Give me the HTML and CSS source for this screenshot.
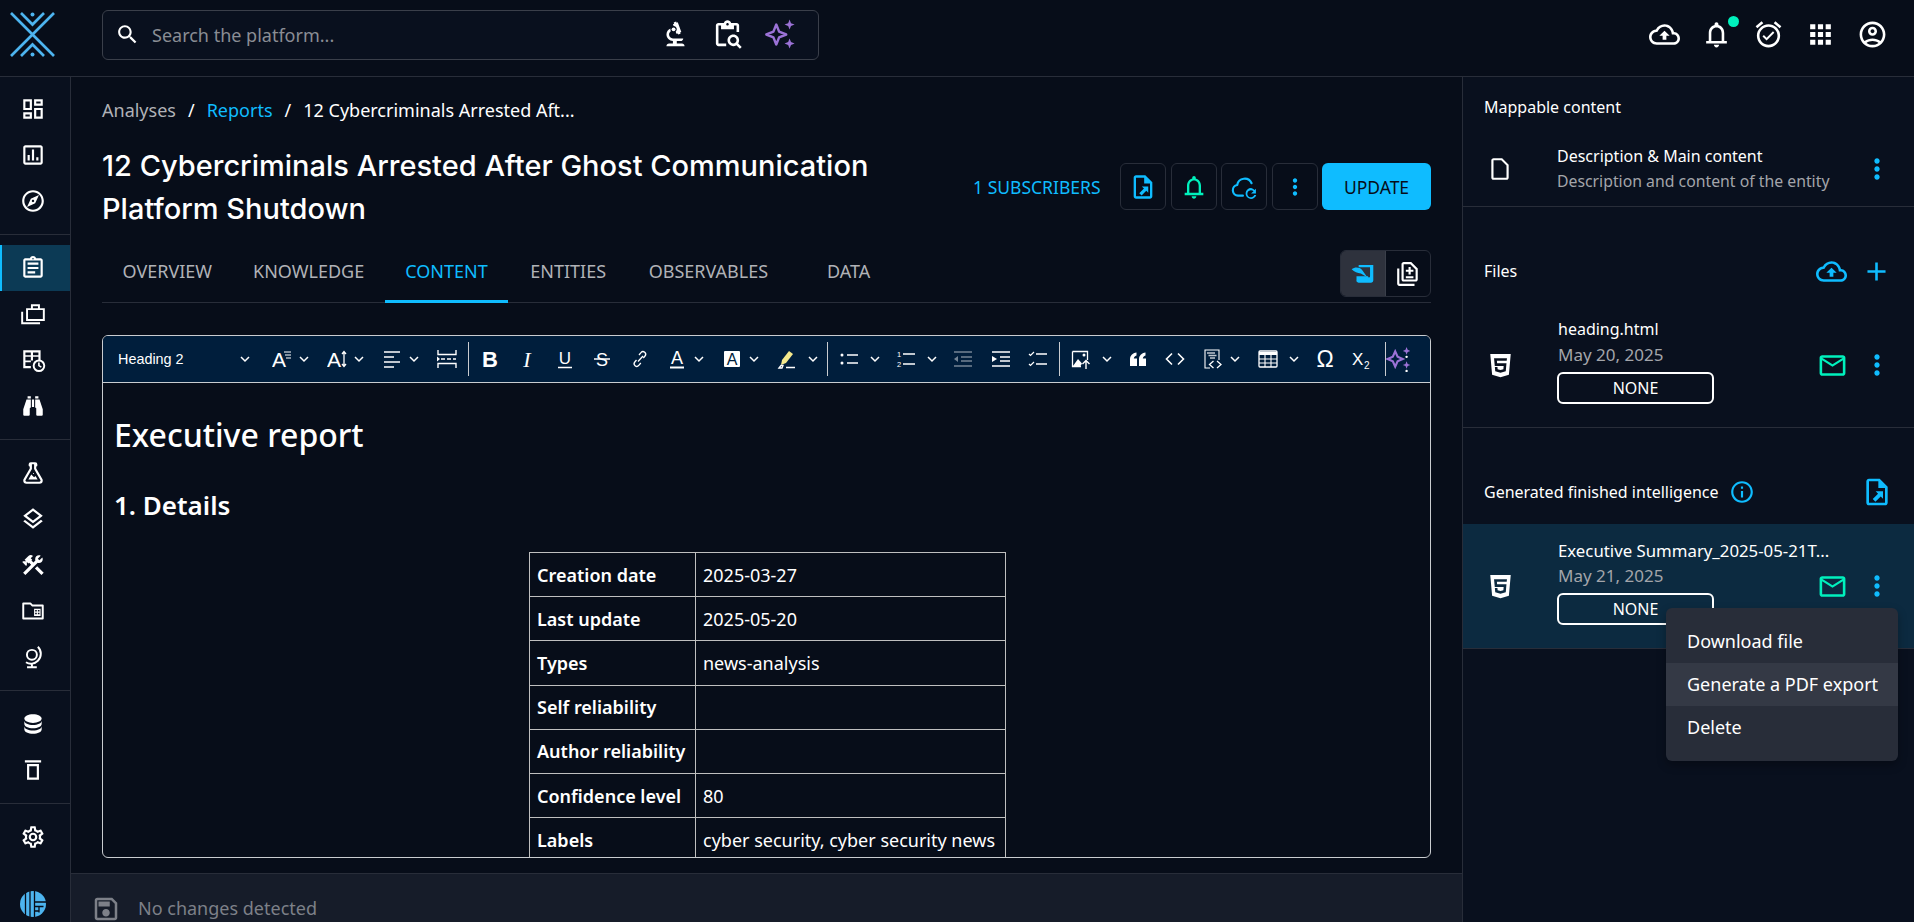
FILE: index.html
```html
<!DOCTYPE html>
<html lang="en">
<head>
    <meta charset="UTF-8">
    <meta name="viewport" content="width=device-width, initial-scale=1.0">
    <title>12 Cybercriminals Arrested After Ghost Communication Platform Shutdown</title>
    <link rel="stylesheet" href="styles.css">
</head>
<body>
    <svg class="sprite" xmlns="http://www.w3.org/2000/svg">
        <symbol id="i-search" viewBox="0 0 24 24"><path d="M15.5 14h-.79l-.28-.27C15.41 12.59 16 11.11 16 9.5 16 5.91 13.09 3 9.5 3S3 5.91 3 9.5 5.91 16 9.5 16c1.61 0 3.09-.59 4.23-1.57l.27.28v.79l5 4.99L20.49 19l-4.99-5zm-6 0C7.01 14 5 11.99 5 9.5S7.01 5 9.5 5 14 7.01 14 9.5 11.99 14 9.5 14z"/></symbol>
        <symbol id="i-biotech" viewBox="0 0 24 24"><path d="M7 19c-1.1 0-2 .9-2 2h14c0-1.1-.9-2-2-2h-4v-2h3c1.1 0 2-.9 2-2h-8c-1.66 0-3-1.34-3-3 0-1.09.59-2.04 1.46-2.56C8.17 9.03 8 8.54 8 8c0-.21.04-.42.09-.62C6.28 8.13 5 9.92 5 12c0 2.76 2.24 5 5 5v2H7z"/><path d="M10.56 5.51C11.91 5.54 13 6.64 13 8c0 .75-.33 1.41-.85 1.87l.59 1.62.94-.34.34.94 1.88-.68-.34-.94.94-.34-2.74-7.52-.94.34-.34-.94-1.88.68.34.94-.94.35.56 1.53z"/><circle cx="10.5" cy="8" r="1.5"/></symbol>
        <symbol id="i-paste-search" viewBox="0 0 24 24"><path d="M5 5h2v3h10V5h2v5h2V5c0-1.1-.9-2-2-2h-4.18C14.4 1.84 13.3 1 12 1S9.6 1.84 9.18 3H5c-1.1 0-2 .9-2 2v14c0 1.1.9 2 2 2h6v-2H5V5zm7-2c.55 0 1 .45 1 1s-.45 1-1 1-1-.45-1-1 .45-1 1-1z"/><path d="M20.3 18.9c.4-.7.7-1.5.7-2.4 0-2.5-2-4.5-4.5-4.5S12 14 12 16.5s2 4.5 4.5 4.5c.9 0 1.7-.3 2.4-.7l2.7 2.7 1.4-1.4-2.7-2.7zm-3.8.1c-1.4 0-2.5-1.1-2.5-2.5s1.1-2.5 2.5-2.5 2.5 1.1 2.5 2.5-1.1 2.500-2.5 2.5z"/></symbol>
        <symbol id="i-sparkle" viewBox="0 0 24 24"><path d="M9.5 4.3l2.2 5.500 5.500 2.200-5.500 2.200-2.200 5.500-2.200-5.500L1.800 12l5.500-2.200z" fill="none" stroke="currentColor" stroke-width="1.9" stroke-linejoin="round"/><path d="M19.8.4l1.1 2.800 2.800 1.100-2.800 1.100-1.100 2.800-1.100-2.800-2.800-1.100 2.800-1.100zM19.8 15.100l1.100 2.800 2.800 1.100-2.800 1.100-1.100 2.800-1.100-2.800-2.800-1.100 2.800-1.100z"/></symbol>
        <symbol id="i-cloud-up" viewBox="0 0 24 24"><path d="M19.35 10.04C18.67 6.59 15.64 4 12 4 9.11 4 6.6 5.64 5.35 8.04 2.34 8.36 0 10.91 0 14c0 3.31 2.69 6 6 6h13c2.76 0 5-2.24 5-5 0-2.64-2.05-4.78-4.65-4.96zM19 18H6c-2.21 0-4-1.79-4-4 0-2.05 1.53-3.76 3.56-3.97l1.07-.11.5-.95C8.08 7.14 9.94 6 12 6c2.62 0 4.88 1.86 5.39 4.43l.3 1.5 1.53.11c1.56.1 2.78 1.41 2.78 2.96 0 1.65-1.35 3-3 3zM8 13h2.55v3h2.9v-3H16l-4-4z"/></symbol>
        <symbol id="i-bell" viewBox="0 0 24 24"><path d="M12 22c1.1 0 2-.9 2-2h-4c0 1.1.9 2 2 2zm6-6v-5c0-3.07-1.63-5.64-4.5-6.32V4c0-.83-.67-1.5-1.5-1.5s-1.5.67-1.5 1.5v.68C7.64 5.36 6 7.92 6 11v6H4v2h16v-2h-2zm-2 1H8v-6c0-2.48 1.51-4.5 4-4.5s4 2.02 4 4.5v6z"/></symbol>
        <symbol id="i-alarm" viewBox="0 0 24 24"><path d="M10.54 14.53 8.41 12.4l-1.06 1.06 3.18 3.18 6-6-1.06-1.06zm6.797-12.72 4.607 3.845-1.28 1.535-4.61-3.843zm-10.674 0 1.282 1.536L3.337 7.19l-1.28-1.536zM12 4c-4.97 0-9 4.03-9 9s4.03 9 9 9 9-4.03 9-9-4.03-9-9-9zm0 16c-3.86 0-7-3.14-7-7s3.14-7 7-7 7 3.14 7 7-3.14 7-7 7z"/></symbol>
        <symbol id="i-apps" viewBox="0 0 24 24"><path d="M4 8h4V4H4v4zm6 12h4v-4h-4v4zm-6 0h4v-4H4v4zm0-6h4v-4H4v4zm6 0h4v-4h-4v4zm6-10v4h4V4h-4zm-6 4h4V4h-4v4zm6 6h4v-4h-4v4zm0 6h4v-4h-4v4z"/></symbol>
        <symbol id="i-user" viewBox="0 0 24 24"><path d="M12 2C6.48 2 2 6.48 2 12s4.48 10 10 10 10-4.48 10-10S17.52 2 12 2zM7.35 18.5C8.66 17.56 10.26 17 12 17s3.34.56 4.65 1.5c-1.31.94-2.91 1.5-4.65 1.5s-3.34-.56-4.65-1.5zm10.79-1.38C16.45 15.8 14.32 15 12 15s-4.45.8-6.14 2.12C4.7 15.73 4 13.95 4 12c0-4.42 3.58-8 8-8s8 3.58 8 8c0 1.95-.7 3.73-1.86 5.12z"/><path d="M12 6c-1.93 0-3.5 1.57-3.5 3.5S10.07 13 12 13s3.5-1.57 3.5-3.5S13.93 6 12 6zm0 5c-.83 0-1.5-.67-1.5-1.5S11.17 8 12 8s1.5.67 1.5 1.5S12.83 11 12 11z"/></symbol>
        <symbol id="i-dash" viewBox="0 0 24 24"><path d="M19 5v2h-4V5h4M9 5v6H5V5h4m10 8v6h-4v-6h4M9 17v2H5v-2h4M21 3h-8v6h8V3zM11 3H3v10h8V3zm10 8h-8v10h8V11zm-10 4H3v6h8v-6z"/></symbol>
        <symbol id="i-assess" viewBox="0 0 24 24"><path d="M19 3H5c-1.1 0-2 .9-2 2v14c0 1.1.9 2 2 2h14c1.1 0 2-.9 2-2V5c0-1.1-.9-2-2-2zm0 16H5V5h14v14z"/><path d="M7 12h2v5H7zM11 7h2v10h-2zM15 14h2v3h-2z"/></symbol>
        <symbol id="i-explore" viewBox="0 0 24 24"><path d="M12 2C6.48 2 2 6.48 2 12s4.48 10 10 10 10-4.48 10-10S17.52 2 12 2zm0 18c-4.41 0-8-3.59-8-8s3.59-8 8-8 8 3.59 8 8-3.59 8-8 8zm-5.5-2.5l7.51-3.49L17.5 6.5 9.99 9.99 6.5 17.5zm5.5-6.6c.61 0 1.1.49 1.1 1.1s-.49 1.1-1.1 1.1-1.1-.49-1.1-1.1.49-1.1 1.1-1.1z"/></symbol>
        <symbol id="i-assign" viewBox="0 0 24 24"><path d="M7 15h7v2H7zm0-4h10v2H7zm0-4h10v2H7zm12-4h-4.18C14.4 1.84 13.3 1 12 1c-1.3 0-2.4.84-2.82 2H5c-.14 0-.27.01-.4.04-.39.08-.74.28-1.01.55-.18.18-.33.4-.43.64-.1.23-.16.49-.16.77v14c0 .27.06.54.16.78s.25.45.43.64c.27.27.62.47 1.01.55.13.02.26.03.4.03h14c1.1 0 2-.9 2-2V5c0-1.1-.9-2-2-2zm-7-.25c.41 0 .75.34.75.75s-.34.75-.75.75-.75-.34-.75-.75.34-.75.75-.75zM19 19H5V5h14v14z"/></symbol>
        <symbol id="i-cases" viewBox="0 0 24 24"><path d="M6.5 7.5h15.500v10H6.500z M11 7.500V4h6.500v3.500" fill="none" stroke="currentColor" stroke-width="1.800"/><path d="M2 10v10.500h16.500" fill="none" stroke="currentColor" stroke-width="1.800"/></symbol>
        <symbol id="i-table-clock" viewBox="0 0 24 24"><path d="M3 3h16v9h-2V9h-5v3.500h-2V9H5v3.500h5V14H5v3.500h5v2H3zM5 5v2.500h5V5zm7 0v2.500h5V5z" fill-rule="evenodd"/><path d="M17.500 11.500a5.800 5.800 0 1 0 0 11.600 5.800 5.800 0 0 0 0-11.600zm0 9.800a4 4 0 1 1 0-8 4 4 0 0 1 0 8zm-.8-7v3.300l2.600 1.600.8-1.300-1.900-1.100v-2.500z"/></symbol>
        <symbol id="i-binoc" viewBox="0 0 24 24"><path d="M11 6h2v7h-2V6M9 20a1 1 0 0 1-1 1H4a1 1 0 0 1-1-1v-5l3-9h4v7a1 1 0 0 1-1 1v6m1-15H7V3h3v2m5 15v-6a1 1 0 0 1-1-1V6h4l3 9v5a1 1 0 0 1-1 1h-4a1 1 0 0 1-1-1m-1-15V3h3v2h-3z"/></symbol>
        <symbol id="i-flask" viewBox="0 0 24 24"><path d="M5 19a1 1 0 0 0 1 1h12a1 1 0 0 0 1-1c0-.21-.07-.41-.18-.57L13 8.350V4h-2v4.350L5.180 18.430C5.070 18.590 5 18.790 5 19m1 3a3 3 0 0 1-3-3c0-.6.180-1.160.5-1.630L9 7.810V6a1 1 0 0 1-1-1V4a2 2 0 0 1 2-2h4a2 2 0 0 1 2 2v1a1 1 0 0 1-1 1v1.810l5.500 9.560c.32.470.5 1.030.5 1.630a3 3 0 0 1-3 3H6m7-6 1.340-1.340L16.270 18H7.730l2.660-4.610L13 16m-.5-4a.5.5 0 0 1 .5.5.5.5 0 0 1-.5.5.5.5 0 0 1-.5-.5.5.5 0 0 1 .5-.5z"/></symbol>
        <symbol id="i-layers" viewBox="0 0 24 24"><path d="M11.990 18.540l-7.370-5.730L3 14.070l9 7 9-7-1.630-1.270-7.380 5.740zM12 16l7.360-5.730L21 9l-9-7-9 7 1.630 1.270L12 16zm0-11.470L17.740 9 12 13.470 6.260 9 12 4.530z"/></symbol>
        <symbol id="i-tools" viewBox="0 0 24 24"><path d="M13.780 15.300l6 6 2.110-2.160-6-6-2.110 2.160M17.500 10.100c-.39 0-.81-.05-1.140-.19L4.970 21.250l-2.110-2.110 7.410-7.400L8.500 9.960l-.72.7-1.450-1.410v2.860l-.7.700-3.520-3.560.7-.7h2.810L4.220 7.140l3.560-3.560c1.170-1.170 3.050-1.170 4.220 0L9.890 5.740l1.410 1.400-.71.71 1.790 1.780 1.820-1.880c-.14-.33-.2-.75-.2-1.120 0-1.970 1.560-3.520 3.500-3.520.59 0 1.110.14 1.580.42L16.410 6.200l1.500 1.500 2.670-2.670c.28.470.42.97.42 1.600 0 1.920-1.550 3.470-3.500 3.470z"/></symbol>
        <symbol id="i-folder" viewBox="0 0 24 24"><path d="M3 5h6.500l2 2H21v12H3z" fill="none" stroke="currentColor" stroke-width="1.800" stroke-linejoin="round"/><path d="M13 10h6v6.500h-6zm1 1v1.500h1.500V11zm2.500 0v1.500H18V11zM14 13.500V15h1.500v-1.500zm2.500 0V15H18v-1.500z" fill-rule="evenodd"/></symbol>
        <symbol id="i-globe" viewBox="0 0 24 24"><circle cx="11" cy="10" r="4.600" fill="none" stroke="currentColor" stroke-width="1.800"/><path d="M16.500 2.500c3.600 3.600 3.600 9.400 0 13-3 3-7.600 3.500-11 1.300M11 18.500V21M6.500 21.500h9" fill="none" stroke="currentColor" stroke-width="1.800"/></symbol>
        <symbol id="i-db" viewBox="0 0 24 24"><path d="M12 3C7.580 3 4 4.790 4 7c0 2.210 3.580 4 8 4s8-1.790 8-4c0-2.210-3.580-4-8-4M4 9v3c0 2.210 3.580 4 8 4s8-1.790 8-4V9c0 2.210-3.580 4-8 4s-8-1.790-8-4m0 5v3c0 2.210 3.580 4 8 4s8-1.790 8-4v-3c0 2.210-3.580 4-8 4s-8-1.790-8-4z"/></symbol>
        <symbol id="i-trash" viewBox="0 0 24 24"><path d="M4.500 3h15v2h-15zM6.500 6.500h11V21h-11zm2 2V19h7V8.500z" fill-rule="evenodd"/></symbol>
        <symbol id="i-cog" viewBox="0 0 24 24"><path d="M12 8a4 4 0 0 1 4 4 4 4 0 0 1-4 4 4 4 0 0 1-4-4 4 4 0 0 1 4-4m0 2a2 2 0 0 0-2 2 2 2 0 0 0 2 2 2 2 0 0 0 2-2 2 2 0 0 0-2-2m-2 12c-.25 0-.46-.18-.5-.42l-.37-2.650c-.63-.25-1.170-.59-1.690-.99l-2.490 1.010c-.22.08-.49 0-.61-.22l-2-3.460c-.13-.22-.07-.49.12-.64l2.110-1.660L4.500 12l.07-1-2.110-1.630c-.19-.15-.25-.42-.12-.64l2-3.460c.12-.22.39-.31.61-.22l2.490 1c.52-.39 1.060-.73 1.690-.98l.37-2.650c.04-.24.25-.42.5-.42h4c.25 0 .46.18.5.42l.37 2.650c.63.25 1.170.59 1.690.98l2.490-1c.22-.09.49 0 .61.22l2 3.460c.13.22.07.49-.12.64L19.430 11l.07 1-.07 1 2.110 1.630c.19.15.25.42.12.64l-2 3.460c-.12.22-.39.31-.61.22l-2.490-1c-.52.39-1.060.73-1.690.98l-.37 2.650c-.04.24-.25.42-.5.42h-4m1.250-18-.37 2.610c-1.200.25-2.260.89-3.030 1.780L5.440 7.350l-.75 1.300L6.800 10.200c-.4 1.170-.4 2.440 0 3.600l-2.120 1.560.75 1.300 2.430-1.040c.77.880 1.820 1.520 3.010 1.760l.37 2.620h1.520l.37-2.610c1.190-.25 2.240-.89 3.010-1.770l2.430 1.040.75-1.300-2.120-1.550c.4-1.170.4-2.440 0-3.610l2.110-1.550-.75-1.300-2.410 1.040c-.77-.890-1.830-1.530-3.030-1.770L12.750 4h-1.500z"/></symbol>
        <symbol id="i-more" viewBox="0 0 24 24"><path d="M12 8c1.100 0 2-.9 2-2s-.9-2-2-2-2 .9-2 2 .9 2 2 2zm0 2c-1.100 0-2 .9-2 2s.9 2 2 2 2-.9 2-2-.9-2-2-2zm0 6c-1.100 0-2 .9-2 2s.9 2 2 2 2-.9 2-2-.9-2-2-2z"/></symbol>
        <symbol id="i-file-export" viewBox="0 0 24 24"><path d="M14 2H6c-1.100 0-2 .9-2 2v16c0 1.100.9 2 2 2h12c1.100 0 2-.9 2-2V8l-6-6zm4 18H6V4h7v5h5v11z"/><path d="M16.500 11.500H11l1.800 1.800-4 4 2 2 4-4 1.700 1.700z"/></symbol>
        <symbol id="i-cloud-refresh" viewBox="0 0 24 24"><path d="M11 20H6.500a5 5 0 0 1-.8-9.900A7 7 0 0 1 19 8.500" fill="none" stroke="currentColor" stroke-width="2" stroke-linecap="round"/><path d="M18.500 13a5 5 0 1 0 4.800 6.300h-1.800a3.300 3.300 0 1 1-.7-3.300L18.500 18H23v-4.500l-1.300 1.300a5 5 0 0 0-3.200-1.800z"/></symbol>
        <symbol id="i-feather" viewBox="0 0 24 24"><path d="M8 3.700h13.500V18a2 2 0 0 1-2 2H8a2.500 2.500 0 0 1-2-3v-3h10.500l1 1.500 1-1V5.800H8z"/><path d="M1.500 7.500C5 5 9 6 11 8l5 7-6-3.500c-3-.5-6-1.500-8.500-4z"/></symbol>
        <symbol id="i-diff" viewBox="0 0 24 24"><path d="M18 23H4c-1.100 0-2-.9-2-2V7h2v14h14v2zM15 1H8c-1.100 0-1.990.9-1.990 2L6 17c0 1.100.89 2 1.990 2H19c1.100 0 2-.9 2-2V7l-6-6zm4 16H8V3h6.170L19 7.830V17z"/><path d="M14.500 5.500h-2v2.500H10v2h2.500v2.500h2V10H17V8h-2.500zM10 14h7v2h-7z"/></symbol>
        <symbol id="i-page" viewBox="0 0 24 24"><path d="M13.170 4 18 8.830V20H6V4h7.170M14 2H6c-1.100 0-2 .9-2 2v16c0 1.100.9 2 2 2h12c1.100 0 2-.9 2-2V8l-6-6z"/></symbol>
        <symbol id="i-html" viewBox="0 0 24 24"><path d="M12 17.560l4.070-1.130.55-6.100H9.380L9.200 8.300h7.600l.2-1.990H7l.56 6.010h6.890l-.23 2.580L12 15.500l-2.220-.6-.14-1.660h-2l.29 3.190L12 17.560M4.070 3h15.860L18.500 19.200 12 21l-6.500-1.800L4.070 3z"/></symbol>
        <symbol id="i-mail" viewBox="0 0 24 24"><path d="M22 6c0-1.100-.9-2-2-2H4c-1.100 0-2 .9-2 2v12c0 1.100.9 2 2 2h16c1.100 0 2-.9 2-2V6zm-2 0-8 5-8-5h16zm0 12H4V8l8 5 8-5v10z"/></symbol>
        <symbol id="i-add" viewBox="0 0 24 24"><path d="M19 13h-6v6h-2v-6H5v-2h6V5h2v6h6v2z"/></symbol>
        <symbol id="i-info" viewBox="0 0 24 24"><path d="M11 7h2v2h-2zm0 4h2v6h-2zm1-9C6.480 2 2 6.480 2 12s4.480 10 10 10 10-4.480 10-10S17.520 2 12 2zm0 18c-4.410 0-8-3.590-8-8s3.590-8 8-8 8 3.590 8 8-3.590 8-8 8z"/></symbol>
        <symbol id="i-save" viewBox="0 0 24 24"><path d="M17 3H5c-1.110 0-2 .9-2 2v14c0 1.100.89 2 2 2h14c1.100 0 2-.9 2-2V7l-4-4zm2 16H5V5h11.170L19 7.830V19zm-7-7c-1.660 0-3 1.340-3 3s1.340 3 3 3 3-1.340 3-3-1.340-3-3-3zM6 6h9v4H6z"/></symbol>

        <!-- editor toolbar -->
        <symbol id="t-chev" viewBox="0 0 10 10"><path d="M1 3l4 4 4-4" fill="none" stroke="currentColor" stroke-width="1.500"/></symbol>
        <symbol id="t-fontsize" viewBox="0 0 20 20"><text x="0" y="18" font-family="Liberation Sans" font-size="21">A</text><path d="M12 3h7M13 6h6M14 9h5" stroke="currentColor" stroke-width="1.200"/></symbol>
        <symbol id="t-lineheight" viewBox="0 0 20 20"><text x="0" y="18" font-family="Liberation Sans" font-size="21">A</text><path d="M17 3v14M15 5l2-2.500L19 5M15 15l2 2.500 2-2.500" fill="none" stroke="currentColor" stroke-width="1.300"/></symbol>
        <symbol id="t-align" viewBox="0 0 20 20"><path d="M2 3h16M2 8h10M2 13h16M2 18h10" stroke="currentColor" stroke-width="1.500"/></symbol>
        <symbol id="t-pagebreak" viewBox="0 0 20 20"><path d="M1 1v4.500h18V1M1 19v-4.500h18V19" fill="none" stroke="currentColor" stroke-width="1.400"/><path d="M4 10h4M10 10h4M16 10h3" stroke="currentColor" stroke-width="1.600"/><path d="M0 7.500l3 2.500-3 2.500z"/></symbol>
        <symbol id="t-bold" viewBox="0 0 20 20"><text x="10" y="18" text-anchor="middle" font-family="Liberation Sans" font-weight="700" font-size="22">B</text></symbol>
        <symbol id="t-italic" viewBox="0 0 20 20"><text x="10" y="17.500" text-anchor="middle" font-family="Liberation Serif" font-style="italic" font-size="22">I</text></symbol>
        <symbol id="t-under" viewBox="0 0 20 20"><text x="10" y="15" text-anchor="middle" font-family="Liberation Sans" font-size="17">U</text><path d="M3 18.500h14" stroke="currentColor" stroke-width="1.500"/></symbol>
        <symbol id="t-strike" viewBox="0 0 20 20"><text x="10" y="16.500" text-anchor="middle" font-family="Liberation Sans" font-size="18">S</text><path d="M2 10h16" stroke="currentColor" stroke-width="1.400"/></symbol>
        <symbol id="t-link" viewBox="0 0 20 20"><path d="M8 12.500l5-5.500M6.500 11l-1.700 2a2.600 2.600 0 0 0 4 3.400l2-2.400M9 6l2-2.400a2.600 2.600 0 0 1 4 3.400L13.300 9" fill="none" stroke="currentColor" stroke-width="1.300"/></symbol>
        <symbol id="t-color" viewBox="0 0 20 20"><text x="10" y="15" text-anchor="middle" font-family="Liberation Sans" font-size="18">A</text><path d="M3 18.500h14" stroke="currentColor" stroke-width="1.800"/></symbol>
        <symbol id="t-bgcolor" viewBox="0 0 20 20"><rect x="2" y="2" width="16" height="16" rx="1"/><text x="10" y="16" text-anchor="middle" font-family="Liberation Sans" font-size="16" fill="#001e3c">A</text></symbol>
        <symbol id="t-mark" viewBox="0 0 20 20"><path d="M4 16l1-5 7-9 4 3-7 9z" fill="#f5e98c"/><path d="M2 19l2-2.500h2L5 19zM9 18.500h9" fill="none" stroke="currentColor" stroke-width="1.300"/></symbol>
        <symbol id="t-bullets" viewBox="0 0 20 20"><circle cx="3" cy="6" r="1.500"/><circle cx="3" cy="14" r="1.500"/><path d="M8 6h11M8 14h11" stroke="currentColor" stroke-width="1.500"/></symbol>
        <symbol id="t-numbers" viewBox="0 0 20 20"><text x="1" y="8" font-family="Liberation Sans" font-size="7.500">1</text><text x="1" y="18" font-family="Liberation Sans" font-size="7.500">2</text><path d="M7 5h12M7 15h12" stroke="currentColor" stroke-width="1.500"/></symbol>
        <symbol id="t-outdent" viewBox="0 0 20 20"><path d="M1 3h18M8 8h11M8 12h11M1 17h18" stroke="currentColor" stroke-width="1.500"/><path d="M1 10l4-3v6z"/></symbol>
        <symbol id="t-indent" viewBox="0 0 20 20"><path d="M1 3h18M9 8h10M9 12h10M1 17h18" stroke="currentColor" stroke-width="1.500"/><path d="M6 10L1 7v6z"/></symbol>
        <symbol id="t-todo" viewBox="0 0 20 20"><path d="M1 5l1.500 1.500L6 3M1 15l1.500 1.500L6 13" fill="none" stroke="currentColor" stroke-width="1.200"/><path d="M8 5h11M8 15h11" stroke="currentColor" stroke-width="1.500"/></symbol>
        <symbol id="t-image" viewBox="0 0 20 20"><path d="M1.500 2.500h15v8.500M10 17.500H1.500v-15" fill="none" stroke="currentColor" stroke-width="1.300"/><circle cx="13" cy="6" r="1.500"/><path d="M2 17l5-7 4 4.500-1.500 2.500z"/><path d="M15 20v-8M11.500 15l3.500-3.500 3.500 3.500" fill="none" stroke="currentColor" stroke-width="1.400"/></symbol>
        <symbol id="t-quote" viewBox="0 0 20 20"><path d="M2 10.500C2 6.500 4.500 4 8.500 3.500V6.500C6.800 7 6 8 5.800 9.500H9V17H2zM11 10.500C11 6.500 13.500 4 17.500 3.500V6.500C15.800 7 15 8 14.800 9.500H18V17h-7z"/></symbol>
        <symbol id="t-code" viewBox="0 0 20 20"><path d="M7 4.500L1.500 10 7 15.500M13 4.500l5.500 5.500-5.500 5.500" fill="none" stroke="currentColor" stroke-width="1.600"/></symbol>
        <symbol id="t-source" viewBox="0 0 20 20"><path d="M7 19H2V1h14v10" fill="none" stroke="currentColor" stroke-width="1.100"/><path d="M4 4h8M5.500 6.500h8M7 9h5" stroke="currentColor" stroke-width="1.300" opacity=".75"/><path d="M10.500 12l-4 3.500 4 3.500M14 12l4 3.500-4 3.500" fill="none" stroke="currentColor" stroke-width="1.300"/></symbol>
        <symbol id="t-table" viewBox="0 0 20 20"><rect x="1" y="2" width="18" height="16" rx="1" fill="none" stroke="currentColor" stroke-width="1.300"/><path d="M1 3h18v3H1z"/><path d="M1 10h18M1 14h18M7 6v12M13 6v12" stroke="currentColor" stroke-width="1.100"/></symbol>
        <symbol id="t-omega" viewBox="0 0 20 20"><text x="10" y="18" text-anchor="middle" font-family="Liberation Sans" font-size="23">Ω</text></symbol>
        <symbol id="t-sub" viewBox="0 0 20 20"><text x="0" y="15.500" font-family="Liberation Sans" font-size="17">X</text><text x="12" y="19.500" font-family="Liberation Sans" font-size="10">2</text></symbol>
        <symbol id="t-ai" viewBox="0 0 24 24"><path d="M8.500 5l2.200 4.800 4.800 2.200-4.800 2.200-2.200 4.800-2.200-4.800-4.800-2.200 4.800-2.200z" fill="none" stroke="#9b72d6" stroke-width="2"/><path d="M19 1l1 2.500 2.500 1-2.500 1L19 8l-1-2.500-2.500-1 2.500-1z" fill="#9b72d6"/><path d="M19 14l1 2.500 2.500 1-2.500 1-1 2.500-1-2.500-2.500-1 2.500-1z" fill="#9b72d6"/><circle cx="19" cy="10" r="1.100" fill="currentColor"/><circle cx="19" cy="23" r="1.100" fill="currentColor"/></symbol>
    </svg>

    <header class="topbar">
        <svg class="logo" viewBox="0 0 45 45">
            <path d="M1 1l43 43M44 1L1 44M11 1l11.500 11.500L34 1M11 44l11.500-11.500L34 44" fill="none" stroke="#4db4ef" stroke-width="2.700"/>
            <circle cx="22.500" cy="2.500" r="2" fill="#4db4ef"/>
            <circle cx="22.500" cy="42.500" r="2" fill="#4db4ef"/>
        </svg>
        <div class="search">
            <svg class="ic ic-search"><use href="#i-search"/></svg>
            <span class="search-text">Search the platform...</span>
            <svg class="ic ic-31"><use href="#i-biotech"/></svg>
            <svg class="ic ic-31"><use href="#i-paste-search"/></svg>
            <svg class="ic ic-31 purple"><use href="#i-sparkle"/></svg>
        </div>
        <div class="top-icons">
            <svg class="ic ic-31"><use href="#i-cloud-up"/></svg>
            <span class="bell-wrap"><svg class="ic ic-31"><use href="#i-bell"/></svg><span class="badge"></span></span>
            <svg class="ic ic-31"><use href="#i-alarm"/></svg>
            <svg class="ic ic-31"><use href="#i-apps"/></svg>
            <svg class="ic ic-31"><use href="#i-user"/></svg>
        </div>
    </header>

    <div class="shell">
        <nav class="sidebar">
            <div class="side-group">
                <a class="side-item"><svg class="ic"><use href="#i-dash"/></svg></a>
                <a class="side-item"><svg class="ic"><use href="#i-assess"/></svg></a>
                <a class="side-item"><svg class="ic"><use href="#i-explore"/></svg></a>
            </div>
            <div class="side-group">
                <a class="side-item active"><svg class="ic"><use href="#i-assign"/></svg></a>
                <a class="side-item"><svg class="ic"><use href="#i-cases"/></svg></a>
                <a class="side-item"><svg class="ic"><use href="#i-table-clock"/></svg></a>
                <a class="side-item"><svg class="ic"><use href="#i-binoc"/></svg></a>
            </div>
            <div class="side-group">
                <a class="side-item"><svg class="ic"><use href="#i-flask"/></svg></a>
                <a class="side-item"><svg class="ic"><use href="#i-layers"/></svg></a>
                <a class="side-item"><svg class="ic"><use href="#i-tools"/></svg></a>
                <a class="side-item"><svg class="ic"><use href="#i-folder"/></svg></a>
                <a class="side-item"><svg class="ic"><use href="#i-globe"/></svg></a>
            </div>
            <div class="side-group">
                <a class="side-item"><svg class="ic"><use href="#i-db"/></svg></a>
                <a class="side-item"><svg class="ic"><use href="#i-trash"/></svg></a>
            </div>
            <div class="side-group last">
                <a class="side-item"><svg class="ic"><use href="#i-cog"/></svg></a>
            </div>
            <svg class="filigran" viewBox="0 0 26 26">
                <circle cx="13" cy="13" r="13" fill="#4db4ef"/>
                <path d="M5.500 1v24M10 0v26M14.500 0v26M14.500 11H26M14.500 15.500h9M19 15.500v6M14.500 20h5" fill="none" stroke="#070d19" stroke-width="1.300"/>
            </svg>
        </nav>

        <main class="main">
            <div class="content">
                <div class="breadcrumb">
                    <span class="crumb-muted">Analyses</span>
                    <span class="crumb-sep">/</span>
                    <span class="crumb-link">Reports</span>
                    <span class="crumb-sep">/</span>
                    <span>12 Cybercriminals Arrested Aft...</span>
                </div>

                <div class="title-row">
                    <h1 class="page-title">12 Cybercriminals Arrested After Ghost Communication Platform Shutdown</h1>
                    <div class="actions">
                        <span class="subscribers">1 SUBSCRIBERS</span>
                        <button class="icon-btn blue"><svg class="ic ic-28"><use href="#i-file-export"/></svg></button>
                        <button class="icon-btn green"><svg class="ic ic-28"><use href="#i-bell"/></svg></button>
                        <button class="icon-btn blue"><svg class="ic"><use href="#i-cloud-refresh"/></svg></button>
                        <button class="icon-btn blue"><svg class="ic"><use href="#i-more"/></svg></button>
                        <button class="update-btn">UPDATE</button>
                    </div>
                </div>

                <div class="tabs-row">
                    <div class="tabs">
                        <a class="tab">OVERVIEW</a>
                        <a class="tab">KNOWLEDGE</a>
                        <a class="tab active">CONTENT</a>
                        <a class="tab">ENTITIES</a>
                        <a class="tab">OBSERVABLES</a>
                        <a class="tab">DATA</a>
                    </div>
                    <div class="toggle">
                        <button class="toggle-btn on"><svg class="ic"><use href="#i-feather"/></svg></button>
                        <button class="toggle-btn"><svg class="ic"><use href="#i-diff"/></svg></button>
                    </div>
                </div>

                <section class="editor">
                    <div class="toolbar">
                        <div class="tb-heading">Heading 2 <svg class="tb-chev"><use href="#t-chev"/></svg></div>
                        <span class="tb-item drop"><svg class="tb-ic"><use href="#t-fontsize"/></svg><svg class="tb-chev"><use href="#t-chev"/></svg></span>
                        <span class="tb-item drop"><svg class="tb-ic"><use href="#t-lineheight"/></svg><svg class="tb-chev"><use href="#t-chev"/></svg></span>
                        <span class="tb-item drop"><svg class="tb-ic"><use href="#t-align"/></svg><svg class="tb-chev"><use href="#t-chev"/></svg></span>
                        <span class="tb-item"><svg class="tb-ic"><use href="#t-pagebreak"/></svg></span>
                        <span class="tb-sep"></span>
                        <span class="tb-item"><svg class="tb-ic"><use href="#t-bold"/></svg></span>
                        <span class="tb-item"><svg class="tb-ic"><use href="#t-italic"/></svg></span>
                        <span class="tb-item"><svg class="tb-ic"><use href="#t-under"/></svg></span>
                        <span class="tb-item"><svg class="tb-ic"><use href="#t-strike"/></svg></span>
                        <span class="tb-item"><svg class="tb-ic"><use href="#t-link"/></svg></span>
                        <span class="tb-item drop"><svg class="tb-ic"><use href="#t-color"/></svg><svg class="tb-chev"><use href="#t-chev"/></svg></span>
                        <span class="tb-item drop"><svg class="tb-ic"><use href="#t-bgcolor"/></svg><svg class="tb-chev"><use href="#t-chev"/></svg></span>
                        <span class="tb-item drop wide"><svg class="tb-ic"><use href="#t-mark"/></svg><svg class="tb-chev"><use href="#t-chev"/></svg></span>
                        <span class="tb-sep"></span>
                        <span class="tb-item drop wide"><svg class="tb-ic"><use href="#t-bullets"/></svg><svg class="tb-chev"><use href="#t-chev"/></svg></span>
                        <span class="tb-item drop wide"><svg class="tb-ic"><use href="#t-numbers"/></svg><svg class="tb-chev"><use href="#t-chev"/></svg></span>
                        <span class="tb-item dim"><svg class="tb-ic"><use href="#t-outdent"/></svg></span>
                        <span class="tb-item"><svg class="tb-ic"><use href="#t-indent"/></svg></span>
                        <span class="tb-item"><svg class="tb-ic"><use href="#t-todo"/></svg></span>
                        <span class="tb-sep"></span>
                        <span class="tb-item drop wide"><svg class="tb-ic"><use href="#t-image"/></svg><svg class="tb-chev"><use href="#t-chev"/></svg></span>
                        <span class="tb-item"><svg class="tb-ic"><use href="#t-quote"/></svg></span>
                        <span class="tb-item"><svg class="tb-ic"><use href="#t-code"/></svg></span>
                        <span class="tb-item drop"><svg class="tb-ic"><use href="#t-source"/></svg><svg class="tb-chev"><use href="#t-chev"/></svg></span>
                        <span class="tb-item drop wide"><svg class="tb-ic"><use href="#t-table"/></svg><svg class="tb-chev"><use href="#t-chev"/></svg></span>
                        <span class="tb-item"><svg class="tb-ic"><use href="#t-omega"/></svg></span>
                        <span class="tb-item"><svg class="tb-ic"><use href="#t-sub"/></svg></span>
                        <span class="tb-sep last"></span>
                        <svg class="tb-ai"><use href="#t-ai"/></svg>
                    </div>
                    <div class="editor-body">
                        <h2 class="doc-h1">Executive report</h2>
                        <h3 class="doc-h2">1. Details</h3>
                        <table class="doc-table">
                            <tbody>
                                <tr><th>Creation date</th><td>2025-03-27</td></tr>
                                <tr><th>Last update</th><td>2025-05-20</td></tr>
                                <tr><th>Types</th><td>news-analysis</td></tr>
                                <tr><th>Self reliability</th><td></td></tr>
                                <tr><th>Author reliability</th><td></td></tr>
                                <tr><th>Confidence level</th><td>80</td></tr>
                                <tr><th>Labels</th><td>cyber security, cyber security news</td></tr>
                            </tbody>
                        </table>
                    </div>
                </section>
            </div>
            <footer class="save-bar">
                <svg class="ic"><use href="#i-save"/></svg>
                <span>No changes detected</span>
            </footer>
        </main>

        <aside class="panel">
            <section class="panel-section first">
                <div class="panel-head tight"><span>Mappable content</span></div>
                <div class="row row-plain">
                    <svg class="ic row-icon"><use href="#i-page"/></svg>
                    <div class="row-text">
                        <div class="row-title">Description &amp; Main content</div>
                        <div class="row-sub">Description and content of the entity</div>
                    </div>
                    <svg class="ic blue row-more"><use href="#i-more"/></svg>
                </div>
            </section>
            <section class="panel-section">
                <div class="panel-head">
                    <span>Files</span>
                    <span class="head-icons">
                        <svg class="ic ic-31 blue"><use href="#i-cloud-up"/></svg>
                        <svg class="ic ic-31 blue"><use href="#i-add"/></svg>
                    </span>
                </div>
                <div class="row">
                    <svg class="ic row-icon html"><use href="#i-html"/></svg>
                    <div class="row-text">
                        <div class="row-title">heading.html</div>
                        <div class="row-sub date">May 20, 2025</div>
                        <div class="chip">NONE</div>
                    </div>
                    <svg class="ic ic-31 green row-mail"><use href="#i-mail"/></svg>
                    <svg class="ic blue row-more"><use href="#i-more"/></svg>
                </div>
            </section>
            <section class="panel-section">
                <div class="panel-head">
                    <span class="head-label">Generated finished intelligence <svg class="ic ic-info blue"><use href="#i-info"/></svg></span>
                    <svg class="ic blue head-export"><use href="#i-file-export"/></svg>
                </div>
                <div class="row selected">
                    <svg class="ic row-icon html"><use href="#i-html"/></svg>
                    <div class="row-text">
                        <div class="row-title long">Executive Summary_2025-05-21T...</div>
                        <div class="row-sub date">May 21, 2025</div>
                        <div class="chip">NONE</div>
                    </div>
                    <svg class="ic ic-31 green row-mail"><use href="#i-mail"/></svg>
                    <svg class="ic blue row-more"><use href="#i-more"/></svg>
                </div>
            </section>
        </aside>
    </div>

    <ul class="menu">
        <li>Download file</li>
        <li class="hover">Generate a PDF export</li>
        <li>Delete</li>
    </ul>
</body>
</html>
```

FILE: styles.css
```css
* {
    box-sizing: border-box;
}

body {
    margin: 0;
    height: 100vh;
    overflow: hidden;
    display: flex;
    flex-direction: column;
    background-color: #070d19;
    color: #fff;
    font-family: "Noto Sans", sans-serif;
    font-size: 16px;
}

.sprite {
    display: none;
}

.ic {
    width: 26px;
    height: 26px;
    fill: currentColor;
    flex: none;
    display: block;
}

.ic-28 {
    width: 28px;
    height: 28px;
}

.ic-31 {
    width: 31px;
    height: 31px;
}

.blue {
    color: #0fbcff;
}

.green {
    color: #00f1bd;
}

.purple {
    color: #9b72d6;
}

/* top bar */
.topbar {
    height: 77px;
    flex: none;
    display: flex;
    align-items: center;
    border-bottom: 1px solid #282d39;
    padding-left: 10px;
    padding-bottom: 7px;
}

.logo {
    width: 45px;
    height: 45px;
    flex: none;
}

.search {
    margin-left: 47px;
    width: 717px;
    height: 50px;
    border: 1px solid #3a3f4a;
    border-radius: 6px;
    background-color: #09101e;
    display: flex;
    align-items: center;
    gap: 21px;
    padding: 0 23px 0 12px;
}

.ic-search {
    width: 25px;
    height: 25px;
    margin-right: -9px;
}

.search-text {
    flex: 1;
    font-size: 18px;
    color: #8a8d94;
}

.top-icons {
    margin-left: auto;
    margin-right: 26px;
    display: flex;
    align-items: center;
    gap: 21px;
}

.bell-wrap {
    position: relative;
}

.badge {
    position: absolute;
    top: -3px;
    right: -7px;
    width: 11px;
    height: 11px;
    border-radius: 50%;
    background-color: #00f1bd;
}

/* layout */
.shell {
    flex: 1;
    min-height: 0;
    display: flex;
}

.sidebar {
    width: 71px;
    flex: none;
    display: flex;
    flex-direction: column;
    background-color: #09101e;
    border-right: 1px solid #282d39;
}

.side-group {
    padding: 10px 0;
    border-bottom: 1px solid #282d39;
}

.side-group:first-child {
    padding-top: 9px;
}

.side-group.last {
    border-bottom: none;
}

.side-item {
    height: 46px;
    display: flex;
    align-items: center;
    padding-left: 20px;
}

.side-item.active {
    background-color: #0c3a55;
    border-left: 2px solid #0fbcff;
    padding-left: 18px;
}

.filigran {
    margin: auto 0 5px 20px;
    width: 26px;
    height: 26px;
}

.main {
    flex: 1;
    min-width: 0;
    display: flex;
    flex-direction: column;
}

.content {
    flex: 1;
    min-height: 0;
    display: flex;
    flex-direction: column;
    padding: 21px 31px 15px;
}

/* page header */
.breadcrumb {
    display: flex;
    gap: 12px;
    line-height: 24px;
    font-size: 18px;
}

.crumb-muted {
    color: #b0b2b7;
}

.crumb-link {
    color: #0fbcff;
}

.title-row {
    margin-top: 21px;
    height: 87px;
    display: flex;
    align-items: center;
    justify-content: space-between;
}

.page-title {
    margin: 0;
    width: 810px;
    font-family: Inter, sans-serif;
    font-size: 29px;
    font-weight: 500;
    line-height: 43px;
}

.actions {
    display: flex;
    align-items: center;
    gap: 4.5px;
}

.subscribers {
    color: #0fbcff;
    font-size: 17.5px;
    margin-right: 15px;
}

.icon-btn {
    width: 46px;
    height: 47px;
    background: none;
    border: 1px solid #282d39;
    border-radius: 6px;
    padding: 0;
    display: flex;
    align-items: center;
    justify-content: center;
}

.update-btn {
    width: 109px;
    height: 47px;
    background-color: #0fbcff;
    border: none;
    border-radius: 6px;
    color: #070d19;
    font-family: "Noto Sans", sans-serif;
    font-size: 17.5px;
}

/* tabs */
.tabs-row {
    margin-top: 10px;
    height: 63px;
    flex: none;
    display: flex;
    justify-content: space-between;
    border-bottom: 1px solid #282d39;
}

.tabs {
    display: flex;
}

.tab {
    min-width: 120px;
    padding: 1px 20.5px 0;
    display: flex;
    align-items: center;
    justify-content: center;
    font-size: 18px;
    color: #b0b2b7;
    margin-bottom: -1px;
    border-bottom: 3px solid transparent;
}

.tab.active {
    color: #0fbcff;
    border-bottom-color: #0fbcff;
}

.toggle {
    display: flex;
    align-self: flex-start;
    margin-top: 10px;
    height: 47px;
    width: 91px;
    border: 1px solid #282d39;
    border-radius: 6px;
    overflow: hidden;
}

.toggle-btn {
    flex: 1;
    background: none;
    border: none;
    color: #fff;
    padding: 0;
    display: flex;
    align-items: center;
    justify-content: center;
}

.toggle-btn.on {
    background-color: #2e323d;
    color: #0fbcff;
    border-right: 1px solid #3a3f4a;
}

/* editor */
.editor {
    margin-top: 32px;
    flex: 1;
    min-height: 0;
    display: flex;
    flex-direction: column;
    border: 1px solid #c9ccd0;
    border-radius: 6px;
    overflow: hidden;
}

.toolbar {
    height: 47px;
    flex: none;
    display: flex;
    align-items: center;
    background-color: #001e3c;
    border-bottom: 1px solid #c9ccd0;
}

.tb-heading {
    width: 160px;
    padding-left: 15px;
    padding-right: 13px;
    display: flex;
    align-items: center;
    justify-content: space-between;
    font-family: "Liberation Sans", sans-serif;
    font-size: 14.4px;
}

.tb-chev {
    width: 10px;
    height: 10px;
    flex: none;
    fill: none;
}

.tb-item {
    width: 37.5px;
    height: 36px;
    flex: none;
    display: flex;
    align-items: center;
    padding-left: 9px;
}

.tb-item.drop {
    width: 55px;
    gap: 7px;
}

.tb-item.wide {
    width: 57px;
    gap: 11px;
}

.tb-item.dim {
    opacity: 0.45;
}

.tb-ic {
    width: 20px;
    height: 20px;
    flex: none;
    fill: currentColor;
}

.tb-sep {
    width: 1px;
    height: 34px;
    flex: none;
    margin: 0 2px;
    background-color: #c9ccd0;
}

.tb-sep.last {
    margin: 0 0 0 4px;
}

.tb-ai {
    width: 26px;
    height: 26px;
    flex: none;
    color: #fff;
}

.editor-body {
    flex: 1;
    min-height: 0;
    overflow: hidden;
    padding: 29px 10px 0 11px;
}

.doc-h1 {
    margin: 0;
    font-size: 32px;
    font-weight: 500;
    line-height: 46px;
}

.doc-h2 {
    margin: 30px 0 0;
    font-size: 26px;
    font-weight: 600;
    line-height: 34px;
}

.doc-table {
    margin: 30px auto 0;
    border-collapse: collapse;
    table-layout: fixed;
    width: 477px;
    font-size: 18px;
}

.doc-table th,
.doc-table td {
    height: 44.2px;
    border: 1px solid #bfbfbf;
    padding: 0 7.5px;
    white-space: nowrap;
    text-align: left;
}

.doc-table th {
    width: 166px;
    font-weight: 600;
}

.doc-table td {
    font-weight: 400;
    overflow: hidden;
}

/* save bar */
.save-bar {
    height: 49px;
    flex: none;
    background-color: #161c29;
    border-top: 1px solid #282d39;
    color: #7d8088;
    display: flex;
    align-items: flex-start;
    gap: 17px;
    padding: 20px 0 0 20px;
    font-size: 18px;
    line-height: 28px;
}

.save-bar .ic {
    width: 30px;
    height: 30px;
}

/* right panel */
.panel {
    width: 452px;
    flex: none;
    background-color: #09101e;
    border-left: 1px solid #282d39;
}

.panel-section {
    padding-top: 46px;
    border-bottom: 1px solid #282d39;
}

.panel-section.first {
    padding-top: 12px;
}

.panel-section:last-child {
    border-bottom: none;
}

.panel-head {
    height: 36px;
    margin-bottom: 14px;
    padding: 0 25px 0 21px;
    display: flex;
    align-items: center;
    justify-content: space-between;
}

.panel-head.tight {
    margin-bottom: 0;
}

.head-icons {
    display: flex;
    align-items: center;
    gap: 14px;
    margin-right: -3px;
}

.head-label {
    display: flex;
    align-items: center;
    gap: 10px;
}

.head-export {
    width: 32px;
    height: 32px;
    margin-right: -4px;
}

.row {
    display: flex;
    align-items: center;
    padding: 14px 25px 14px 25px;
}

.row.selected {
    background-color: #0c2a40;
    border-bottom: 1px solid #282d39;
}

.row-plain {
    padding-top: 19px;
    padding-bottom: 12px;
}

.row-icon {
    margin-right: 44px;
    margin-left: -1px;
}

.row-icon.html {
    width: 31px;
    height: 31px;
    margin-left: -3.5px;
    margin-right: 42.5px;
}

.row-text {
    flex: 1;
    min-width: 0;
    line-height: 25px;
}

.row-title.long {
    font-size: 16.8px;
    white-space: nowrap;
}

.row-sub {
    color: #a3a5aa;
    font-size: 15.8px;
}

.row-sub.date {
    font-size: 17px;
}

.chip {
    width: 157px;
    height: 32px;
    margin: 5px 0 9px -1px;
    border: 2px solid #fff;
    border-radius: 6px;
    display: flex;
    align-items: center;
    justify-content: center;
}

.row-mail {
    margin-right: 13px;
    margin-left: 8px;
}

.row-more {
    width: 32px;
    height: 32px;
    margin-right: -4px;
}

/* context menu */
.menu {
    position: absolute;
    left: 1666px;
    top: 608px;
    width: 232px;
    height: 153px;
    margin: 0;
    padding: 12px 0;
    list-style: none;
    background-color: #282d39;
    border-radius: 6px;
    font-size: 18px;
    box-shadow: 0 4px 10px rgba(0, 0, 0, 0.3);
}

.menu li {
    height: 43px;
    padding: 0 0 2px 21px;
    display: flex;
    align-items: center;
}

.menu li.hover {
    background-color: #343945;
}
```
